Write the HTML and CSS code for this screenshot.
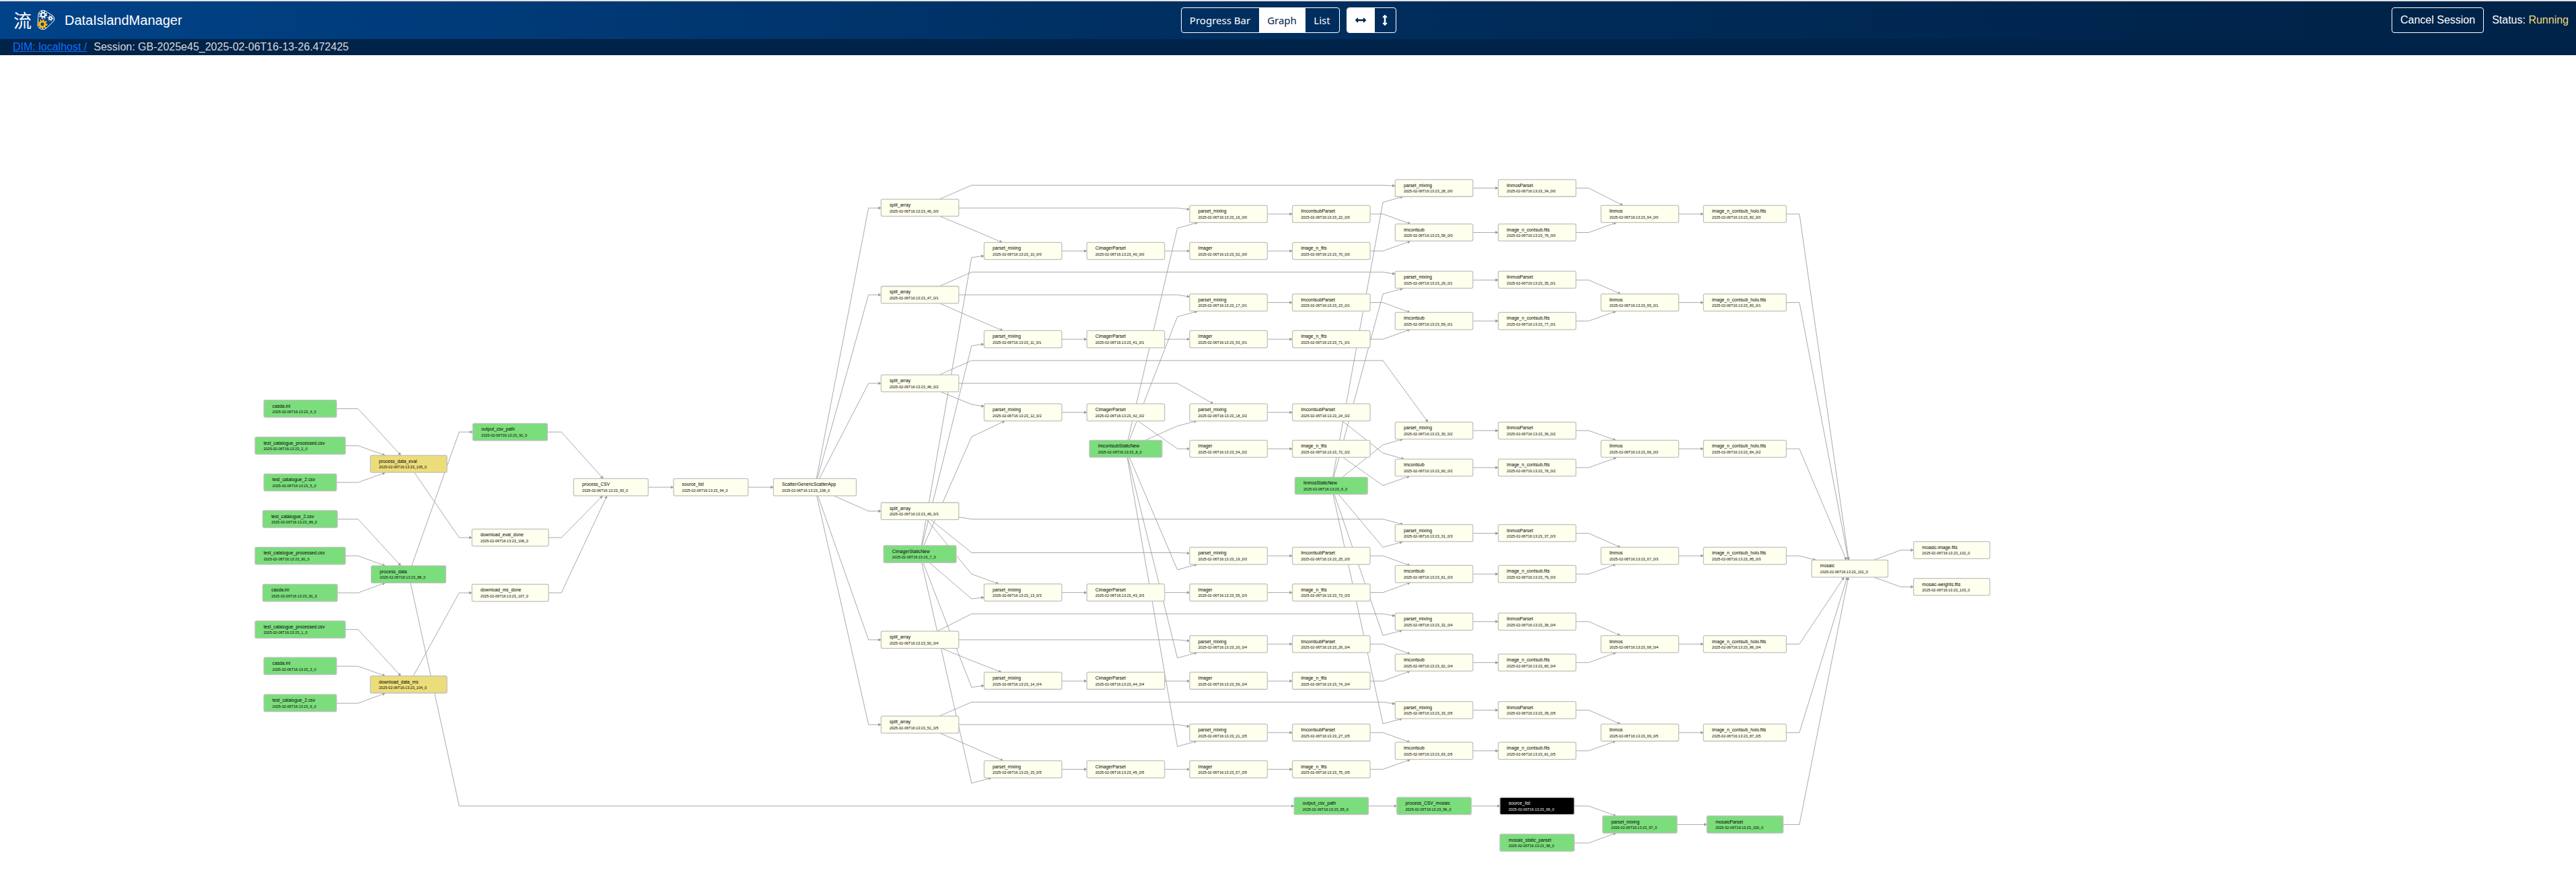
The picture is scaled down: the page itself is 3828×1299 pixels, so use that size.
FILE: index.html
```html
<!DOCTYPE html>
<html lang="en">
<head>
  <meta charset="utf-8">
  <meta name="viewport" content="width=device-width, initial-scale=1">
  <title>DataIslandManager</title>
  <link rel="stylesheet" href="styles.css">
</head>
<body>
  <header class="topbar">
    <div class="navbar">
      <div class="brand">
        <span class="brand-mark" lang="zh">流</span>
        <svg class="brand-gears" viewBox="0 0 28 32" aria-hidden="true">
          <path class="belt" d="M3 8 A7 7 0 0 1 13 2 L24 9 A6 6 0 0 1 26 17 L16 27 A8 8 0 0 1 2 23 Z"/>
          <circle class="gear gear-teeth" cx="10" cy="8" r="5"/>
          <circle class="gear" cx="10" cy="8" r="3"/>
          <circle class="gear gear-teeth small" cx="21" cy="13" r="4"/>
          <circle class="gear" cx="21" cy="13" r="2"/>
          <circle class="gear gold gear-teeth" cx="9" cy="22" r="6"/>
          <circle class="gear gold" cx="9" cy="22" r="4"/>
        </svg>
        <span class="brand-name">DataIslandManager</span>
      </div>
      <div class="views">
        <div class="btn-group" role="group" aria-label="View">
          <button type="button" class="btn wide">Progress Bar</button>
          <button type="button" class="btn medium active" aria-pressed="true">Graph</button>
          <button type="button" class="btn">List</button>
        </div>
        <div class="btn-group" role="group" aria-label="Direction">
          <button type="button" class="btn icon-wide active" aria-label="Left to right" aria-pressed="true">
            <svg class="icon" viewBox="0 0 512 512"><path d="M377.941 169.941V216H134.059v-46.059c0-21.382-25.851-32.09-40.971-16.971L7.029 239.029c-9.373 9.373-9.373 24.568 0 33.941l86.059 86.059c15.119 15.119 40.971 4.411 40.971-16.971V296h243.882v46.059c0 21.382 25.851 32.09 40.971 16.971l86.059-86.059c9.373-9.373 9.373-24.568 0-33.941l-86.059-86.059c-15.119-15.12-40.971-4.412-40.971 16.971z"/></svg>
          </button>
          <button type="button" class="btn icon-narrow" aria-label="Top to bottom">
            <svg class="icon" viewBox="0 0 512 512"><path transform="rotate(90 256 256)" d="M377.941 169.941V216H134.059v-46.059c0-21.382-25.851-32.09-40.971-16.971L7.029 239.029c-9.373 9.373-9.373 24.568 0 33.941l86.059 86.059c15.119 15.119 40.971 4.411 40.971-16.971V296h243.882v46.059c0 21.382 25.851 32.09 40.971 16.971l86.059-86.059c9.373-9.373 9.373-24.568 0-33.941l-86.059-86.059c-15.119-15.12-40.971-4.412-40.971 16.971z"/></svg>
          </button>
        </div>
      </div>
      <div class="session-tools">
        <button type="button" class="cancel">Cancel Session</button>
        <span class="status">Status: <span class="status-value">Running</span></span>
      </div>
    </div>
    <nav class="crumbs">
      <a href="#">DIM: localhost /</a>
      <span>Session: GB-2025e45_2025-02-06T16-13-26.472425</span>
    </nav>
  </header>
  <main>
    <svg class="graph" id="graph" viewBox="0 0 9049 2877" role="img" aria-label="Session graph">
      <defs>
        <marker id="arrow" class="arrow" markerUnits="userSpaceOnUse" viewBox="0 0 10 10" refX="9" refY="5" markerWidth="11" markerHeight="11" orient="auto">
          <path d="M0 0 L10 5 L0 10 Z"/>
        </marker>
      </defs>
      <g id="edges"></g>
      <g id="nodes"></g>
    </svg>
  </main>
  <script src="graph.js"></script>
</body>
</html>
```
FILE: styles.css
```css
* {
  box-sizing: border-box;
}

body {
  margin: 0;
  background: #fff;
  color: #212529;
  font-family: "Liberation Sans", Arial, sans-serif;
  font-size: 16px;
  line-height: 24px;
}

.topbar {
  border-top: 2px solid #e6e2e4;
  color: #fff;
}

.navbar {
  display: grid;
  grid-template-columns: 1fr auto 1fr;
  align-items: center;
  min-height: 56px;
  padding: 0 11px 0 20px;
  background: linear-gradient(to right, #004389, #002f61 45%, #002349 92%);
}

.brand {
  display: flex;
  align-items: center;
}

.brand-mark {
  font-family: "Noto Sans CJK SC", sans-serif;
  font-size: 27px;
}

.brand-gears {
  width: 28px;
  height: 32px;
  margin: 0 14px 0 7px;
}

.belt {
  fill: none;
  stroke: #fff;
  stroke-width: 1;
}

.gear {
  fill: none;
  stroke: #fff;
  stroke-width: 2;
}

.gear.gold {
  stroke: #fdb515;
  stroke-width: 3;
}

.gear-teeth {
  stroke-dasharray: 2 2;
}

.gear-teeth.small {
  stroke-width: 1;
}

.brand-name {
  font-size: 20px;
}

.views {
  display: flex;
  gap: 10px;
  margin-left: -8px;
}

.btn-group {
  display: flex;
  overflow: hidden;
  border: 1px solid #fff;
  border-radius: 4px;
}

.btn {
  display: flex;
  align-items: center;
  justify-content: center;
  width: 50px;
  height: 36px;
  padding: 0;
  border: 0;
  background: transparent;
  color: #fff;
  font-family: "Noto Sans", sans-serif;
  font-size: 15px;
}

.btn.wide {
  width: 115px;
}

.btn.medium {
  width: 69px;
}

.btn.icon-wide {
  width: 41px;
}

.btn.icon-narrow {
  width: 31px;
}

.btn.active {
  background: #fff;
  color: #002349;
}

.icon {
  width: 16px;
  height: 16px;
  fill: currentColor;
}

.session-tools {
  display: flex;
  align-items: center;
  justify-content: flex-end;
  gap: 12px;
}

.cancel {
  height: 38px;
  padding: 0 12px;
  border: 1px solid #fff;
  border-radius: 4px;
  background: transparent;
  color: #fff;
  font: inherit;
}

.status-value {
  color: #ecdd7b;
}

.crumbs {
  display: flex;
  gap: 10px;
  padding: 0 19px;
  background: #002349;
  color: #d5d9de;
}

.crumbs a {
  color: #0d6efd;
}

.graph {
  display: block;
  width: 100%;
  height: auto;
}

.edge {
  fill: none;
  stroke: #999;
  stroke-width: 2;
}

.arrow {
  fill: #999;
}

.node rect {
  fill: #ffffee;
  stroke: #c0c0c0;
  stroke-width: 3;
}

.node text {
  fill: #000;
}

.node .label {
  font-size: 16px;
}

.node .uid {
  font-size: 13px;
}

.node.done rect {
  fill: #7cdd7c;
}

.node.running rect {
  fill: #ecdd7b;
}

.node.skipped rect {
  fill: #000;
}

.node.skipped text {
  fill: #eee;
}
```
FILE: graph.js
```js
// Draws the session graph: rectangles for drops, poly-lines for their links.
const SVG = 'http://www.w3.org/2000/svg';
const UNIT = 2364 / 1000; // drawing units per layout unit
const TOP = 82;           // layout y of the canvas' upper edge
const NODE_HEIGHT = 25.5;
const SESSION = '2025-02-06T16:13:23_';

const nodes = {};
const edges = [];

function node(id, label, x, y, w, state) {
  nodes[id] = { id, label, x, y, w, h: NODE_HEIGHT, state };
}
function edge(from, to, ...bends) {
  edges.push({ from, to, bends });
}

// Catalogue inputs
const inputs = [
  ['4_0', 'casda.ini', 607.5, 108, '105_0'],
  ['2_0', 'test_catalogue_processed.csv', 662.3, 134, '105_0'],
  ['5_0', 'test_catalogue_2.csv', 717, 108, '105_0'],
  ['89_0', 'test_catalogue_2.csv', 771.6, 111, '88_0'],
  ['90_0', 'test_catalogue_processed.csv', 826, 134, '88_0'],
  ['91_0', 'casda.ini', 881, 111, '88_0'],
  ['1_0', 'test_catalogue_processed.csv', 935.5, 134, '104_0'],
  ['3_0', 'casda.ini', 990, 108, '104_0'],
  ['6_0', 'test_catalogue_2.csv', 1045, 108, '104_0'],
];
inputs.forEach(([id, label, y, w, target]) => {
  node(id, label, 446, y, w, 'done');
  edge(id, target, [532, y]);
});

node('105_0', 'process_data_eval', 607.3, 689.6, 114, 'running');
node('88_0', 'process_data', 607.3, 853.6, 111, 'done');
node('104_0', 'download_data_ms', 607.3, 1017.5, 114, 'running');
node('92_0', 'output_csv_path', 758.3, 642, 111, 'done');
node('106_0', 'download_eval_done', 758.3, 799, 114);
node('107_0', 'download_ms_done', 758.3, 881, 114);
node('93_0', 'process_CSV', 908, 724, 111);
node('94_0', 'source_list', 1056.4, 724, 111);
node('108_0', 'Scatter/GenericScatterApp', 1210.7, 724, 123);
edge('105_0', '106_0', [682.5, 799]);
edge('88_0', '92_0', [682.5, 642]);
edge('88_0', '95_0', [682.5, 1198]);
edge('104_0', '107_0', [682.5, 881]);
edge('92_0', '93_0', [834.3, 642]);
edge('106_0', '93_0', [834.3, 799]);
edge('107_0', '93_0', [834.3, 881]);
edge('93_0', '94_0');
edge('94_0', '108_0');

// Static parameter sets
node('7_0', 'CimagerStaticNew', 1367, 823.7, 108, 'done');
node('8_0', 'ImcontsubStaticNew', 1673, 667.2, 108, 'done');
node('9_0', 'linmosStaticNew', 1978.3, 722, 108, 'done');

// The six scattered branches. Row positions (layout y) of the nodes come
// first, then the positions at which their links bend.
const branches = [
  { split: 309, cim: 373, img: 373, con: 318, mix: 279.5, sub: 345.7, out: 318,
    long: 275.3, first: 341, cs: 382.7, is: 339.3, ls: 300.7 },
  { split: 438.2, cim: 504.2, img: 504.2, con: 449.8, mix: 416, sub: 477, out: 449.8,
    long: 404.3, first: 471.5, cs: 513.7, is: 470.7, ls: 437 },
  { split: 569.7, cim: 612.8, img: 667.2, con: 612.8, mix: 640, sub: 695, out: 667.2,
    long: 536, first: 601, cs: 649.3, is: 633.3, ls: 661, subIn: [673.3, 721.7] },
  { split: 759.8, cim: 880.7, img: 880.7, con: 826, mix: 792.5, sub: 853.2, out: 826,
    long: 771.4, mid: 821.3, first: 853.3, cs: 890, is: 846.7, ls: 813.2 },
  { split: 951, cim: 1012, img: 1012, con: 957.3, mix: 924, sub: 984.8, out: 957.3,
    long: 912.5, first: 981.6, cs: 1021.3, is: 978, ls: 944.6 },
  { split: 1077, cim: 1143.3, img: 1143.3, con: 1088.8, mix: 1055.2, sub: 1116, out: 1088.8,
    long: 1043.3, first: 1110, cs: 1164, is: 1109.3, ls: 1075.7 },
];

branches.forEach((b, i) => {
  const id = (n) => `${n + i}_0/${i}`;
  node(id(46), 'split_array', 1367, b.split, 115.5);
  node(id(10), 'parset_mixing', 1520, b.cim, 115.5);
  node(id(40), 'CimagerParset', 1673, b.cim, 115.5);
  node(id(16), 'parset_mixing', 1825.5, b.con, 115.5);
  node(id(52), 'Imager', 1825.5, b.img, 115.5);
  node(id(22), 'ImcontsubParset', 1978.3, b.con, 115.5);
  node(id(70), 'image_n_fits', 1978.3, b.img, 115.5);
  node(id(28), 'parset_mixing', 2131, b.mix, 115.5);
  node(id(58), 'imcontsub', 2131, b.sub, 115.5);
  node(id(34), 'linmosParset', 2284, b.mix, 115.5);
  node(id(76), 'image_n_contsub.fits', 2284, b.sub, 115.5);
  node(id(64), 'linmos', 2436.8, b.out, 115.5);
  node(id(82), 'image_n_contsub_holo.fits', 2593, b.out, 123);

  const subIn = b.subIn || [b.con, b.img];
  const mid = b.mid || b.split;
  edge('108_0', id(46), [1290.7, b.split]);
  edge(id(46), id(28), [1443.7, b.long], [2054.8, b.long]);
  edge(id(46), id(16), [1443.7, mid], [1749.4, mid]);
  edge(id(46), id(10), [1443.7, b.first]);
  edge('7_0', id(10), [1443.7, b.cs]);
  edge(id(10), id(40));
  edge(id(40), id(52), [1749.4, b.img]);
  edge('8_0', id(16), [1749.4, b.is]);
  edge(id(16), id(22));
  edge(id(52), id(70));
  edge('9_0', id(28), [2054.8, b.ls]);
  edge(id(22), id(58), [2054.8, subIn[0]]);
  edge(id(70), id(58), [2054.8, subIn[1]]);
  edge(id(28), id(34));
  edge(id(58), id(76));
  edge(id(34), id(64), [2360.8, b.mix]);
  edge(id(76), id(64), [2360.8, b.sub]);
  edge(id(64), id(82));
  edge(id(82), '101_0', [2673.8, b.out]);
});

// Mosaic stage
node('95_0', 'output_csv_path', 1978.3, 1198, 110.5, 'done');
node('96_0', 'process_CSV_mosaic', 2131, 1198, 110.5, 'done');
node('99_0', 'source_list', 2284, 1198, 110.5, 'skipped');
node('98_0', 'mosaic_static_parset', 2284, 1252.7, 110.5, 'done');
node('97_0', 'parset_mixing', 2436.8, 1225.4, 110.5, 'done');
node('100_0', 'mosaicParset', 2593, 1225.4, 113.5, 'done');
node('101_0', 'mosaic', 2749, 845, 113.5);
node('102_0', 'moasic-image.fits', 2900.4, 817.7, 113.5);
node('103_0', 'mosaic-weights.fits', 2900.4, 872.3, 113.5);
edge('95_0', '96_0');
edge('96_0', '99_0');
edge('99_0', '97_0', [2360.8, 1198]);
edge('98_0', '97_0', [2360.8, 1252.7]);
edge('97_0', '100_0');
edge('100_0', '101_0', [2673.8, 1225.4]);
edge('101_0', '102_0', [2824.4, 817.7]);
edge('101_0', '103_0', [2824.4, 872.3]);

function toCanvas([x, y]) {
  return [Math.round(x * UNIT), Math.round((y - TOP) * UNIT)];
}

// Where the ray from a node's centre towards a point leaves its rectangle.
function border(n, [px, py]) {
  const dx = px - n.x;
  const dy = py - n.y;
  const t = Math.min(
    dx ? n.w / 2 / Math.abs(dx) : Infinity,
    dy ? n.h / 2 / Math.abs(dy) : Infinity
  );
  return [n.x + dx * t, n.y + dy * t];
}

function make(name, attrs, parent, text) {
  const el = document.createElementNS(SVG, name);
  Object.entries(attrs).forEach(([key, value]) => el.setAttribute(key, value));
  if (text) el.textContent = text;
  parent.appendChild(el);
  return el;
}

const edgeLayer = document.getElementById('edges');
const nodeLayer = document.getElementById('nodes');

edges.forEach(({ from, to, bends }) => {
  const a = nodes[from];
  const b = nodes[to];
  const start = border(a, bends[0] || [b.x, b.y]);
  const end = border(b, bends[bends.length - 1] || [a.x, a.y]);
  const points = [start, ...bends, end].map((p) => toCanvas(p).join(',')).join(' ');
  make('polyline', { class: 'edge', points, 'marker-end': 'url(#arrow)' }, edgeLayer);
});

Object.values(nodes).forEach((n) => {
  const [x, y] = toCanvas([n.x - n.w / 2, n.y - n.h / 2]);
  const g = make('g', { class: `node ${n.state || ''}`, transform: `translate(${x} ${y})` }, nodeLayer);
  make('rect', { width: Math.round(n.w * UNIT), height: Math.round(n.h * UNIT), rx: 5 }, g);
  make('text', { class: 'label', x: 30, y: 26 }, g, n.label);
  make('text', { class: 'uid', x: 30, y: 46 }, g, SESSION + n.id);
});
```
